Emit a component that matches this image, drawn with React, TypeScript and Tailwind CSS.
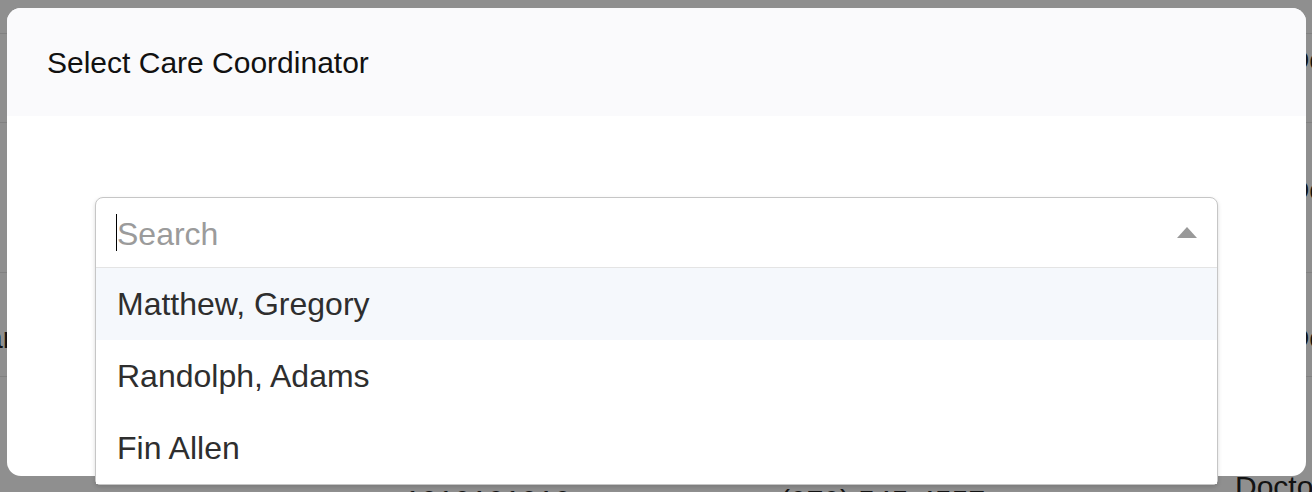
import React from "react";

const coordinators = ["Matthew, Gregory", "Randolph, Adams", "Fin Allen"];

function BackgroundTable() {
  return (
    <div className="absolute inset-0 text-[30px] leading-[36px] text-[#222]">
      <div className="h-[34px] border-b border-[#e6e6e6]" />
      <div className="flex h-[89px] items-start justify-end border-b border-[#e6e6e6] pt-[8px]">
        <span className="translate-x-[14px]">Do</span>
      </div>
      <div className="flex h-[150px] items-start justify-end border-b border-[#e6e6e6] pt-[49px]">
        <span className="translate-x-[14px]">Do</span>
      </div>
      <div className="flex h-[104px] items-start justify-between border-b border-[#e6e6e6] pt-[47px]">
        <span className="-translate-x-[14px]">an</span>
        <span className="translate-x-[14px]">Do</span>
      </div>
      <div className="relative h-[115px]">
        <span className="absolute left-[404px] top-[106px]">1010101010</span>
        <span className="absolute left-[780px] top-[106px]">(070) 545-4557</span>
        <span className="absolute left-[1235px] top-[92px]">Doctor</span>
      </div>
    </div>
  );
}

function CoordinatorSelect() {
  return (
    <div className="relative rounded-t-[8px] rounded-b-[5px] border border-[#c6c6c6] bg-white shadow-[0_2px_4px_rgba(0,0,0,0.15)]">
      <div className="flex h-[70px] items-center border-b border-[#e4e4e4] pl-[20px] pr-[20px]">
        <span className="h-[37px] w-px bg-black" />
        <span className="pt-[3px] text-[32px] text-[#9b9b9b]">Search</span>
        <svg className="ml-auto" width="20" height="11" viewBox="0 0 20 11">
          <polygon points="10,0 20,11 0,11" fill="#999" />
        </svg>
      </div>
      {coordinators.map((name, i) => (
        <div
          key={name}
          className={
            "flex h-[72px] items-center pl-[21px] text-[32px] text-[#2e2e2e] " +
            (i === 0 ? "bg-[#f5f8fc]" : "bg-white")
          }
        >
          {name}
        </div>
      ))}
    </div>
  );
}

export default function App() {
  return (
    <div
      className="relative h-[492px] w-full overflow-hidden bg-white"
      style={{ fontFamily: '"Liberation Sans", Arial, sans-serif' }}
    >
      <BackgroundTable />
      <div className="absolute inset-0 bg-black/[0.44]" />
      <div className="absolute left-[7px] top-[8px] h-[468px] w-[1299px] rounded-[14px] bg-white">
        <div className="flex h-[108px] items-center rounded-t-[14px] bg-[#fafafc] px-10">
          <h2 className="text-[30px] text-[#111]">Select Care Coordinator</h2>
        </div>
        <div className="px-[88px] pt-[81px]">
          <CoordinatorSelect />
        </div>
      </div>
    </div>
  );
}
